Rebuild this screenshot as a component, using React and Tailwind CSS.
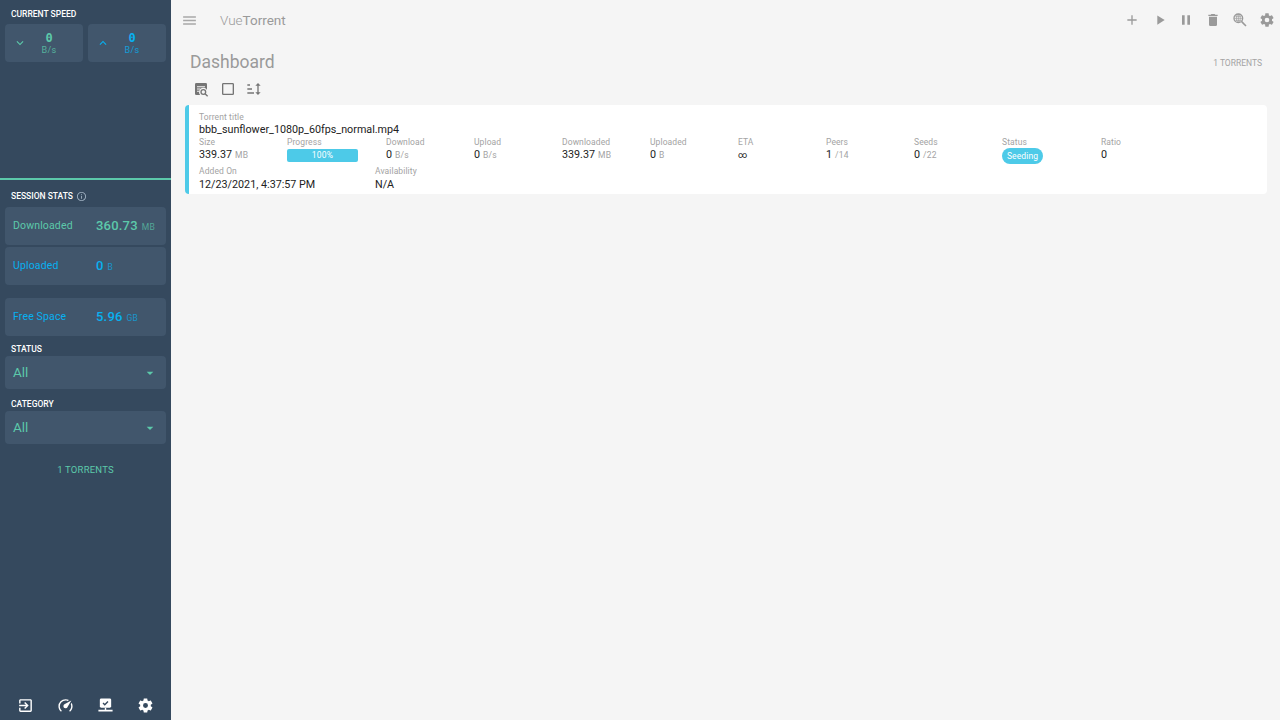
import React from 'react';

const Icon = ({ d, className, evenOdd }) => (
  <svg viewBox="0 0 24 24" className={className} fill="currentColor">
    <path d={d} fillRule={evenOdd ? 'evenodd' : 'nonzero'} />
  </svg>
);

const icons = {
  menu: 'M3,6H21V8H3V6M3,11H21V13H3V11M3,16H21V18H3V16Z',
  plus: 'M19,13H13V19H11V13H5V11H11V5H13V11H19V13Z',
  play: 'M8,5.14V19.14L19,12.14L8,5.14Z',
  pause: 'M14,19H18V5H14M6,19H10V5H6V19Z',
  trash: 'M19,4H15.5L14.5,3H9.5L8.5,4H5V6H19M6,19A2,2 0 0,0 8,21H16A2,2 0 0,0 18,19V7H6V19Z',
  cog: 'M12,15.5A3.5,3.5 0 0,1 8.5,12A3.5,3.5 0 0,1 12,8.5A3.5,3.5 0 0,1 15.5,12A3.5,3.5 0 0,1 12,15.5M19.43,12.97C19.47,12.65 19.5,12.33 19.5,12C19.5,11.67 19.47,11.34 19.43,11L21.54,9.37C21.73,9.22 21.78,8.95 21.66,8.73L19.66,5.27C19.54,5.05 19.27,4.96 19.05,5.05L16.56,6.05C16.04,5.66 15.5,5.32 14.87,5.07L14.5,2.42C14.46,2.18 14.25,2 14,2H10C9.75,2 9.54,2.18 9.5,2.42L9.13,5.07C8.5,5.32 7.96,5.66 7.44,6.05L4.95,5.05C4.73,4.96 4.46,5.05 4.34,5.27L2.34,8.73C2.21,8.95 2.27,9.22 2.46,9.37L4.57,11C4.53,11.34 4.5,11.67 4.5,12C4.5,12.33 4.53,12.65 4.57,12.97L2.46,14.63C2.27,14.78 2.21,15.05 2.34,15.27L4.34,18.73C4.46,18.95 4.73,19.03 4.95,18.95L7.44,17.94C7.96,18.34 8.5,18.68 9.13,18.93L9.5,21.58C9.54,21.82 9.75,22 10,22H14C14.25,22 14.46,21.82 14.5,21.58L14.87,18.93C15.5,18.67 16.04,18.34 16.56,17.94L19.05,18.95C19.27,19.03 19.54,18.95 19.66,18.73L21.66,15.27C21.78,15.05 21.73,14.78 21.54,14.63L19.43,12.97Z',
  down: 'M7.41,8.58L12,13.17L16.59,8.58L18,10L12,16L6,10L7.41,8.58Z',
  up: 'M7.41,15.41L12,10.83L16.59,15.41L18,14L12,8L6,14L7.41,15.41Z',
  caret: 'M7,10L12,15L17,10H7Z',
  box: 'M19,3H5C3.89,3 3,3.89 3,5V19A2,2 0 0,0 5,21H19A2,2 0 0,0 21,19V5C21,3.89 20.1,3 19,3M19,5V19H5V5H19Z',
  sort: 'M18 21L14 17H17V7H14L18 3L22 7H19V17H22M2 19V17H12V19M2 13V11H9V13M2 7V5H6V7H2Z',
  exit: 'M19,3H5C3.89,3 3,3.89 3,5V9H5V5H19V19H5V15H3V19A2,2 0 0,0 5,21H19A2,2 0 0,0 21,19V5C21,3.89 20.1,3 19,3M10.08,15.58L11.5,17L16.5,12L11.5,7L10.08,8.41L12.67,11H3V13H12.67L10.08,15.58Z',
  speed: 'M12,16A3,3 0 0,1 9,13C9,11.88 9.61,10.9 10.5,10.39L20.21,4.77L14.68,14.35C14.18,15.33 13.17,16 12,16M12,3C13.81,3 15.5,3.5 16.97,4.32L14.87,5.53C14,5.19 13,5 12,5A8,8 0 0,0 4,13C4,15.21 4.89,17.21 6.34,18.65H6.35C6.74,19.04 6.74,19.67 6.35,20.06C5.96,20.45 5.32,20.45 4.93,20.07V20.07C3.12,18.26 2,15.76 2,13A10,10 0 0,1 12,3M22,13C22,15.76 20.88,18.26 19.07,20.07V20.07C18.68,20.45 18.05,20.45 17.66,20.06C17.27,19.67 17.27,19.04 17.66,18.65V18.65C19.11,17.2 20,15.21 20,13C20,12 19.81,11 19.46,10.1L20.67,8C21.5,9.5 22,11.19 22,13Z',
  info: 'M11,9H13V7H11M12,20C7.59,20 4,16.41 4,12C4,7.59 7.59,4 12,4C16.41,4 20,7.59 20,12C20,16.41 16.41,20 12,20M12,2A10,10 0 0,0 2,12A10,10 0 0,0 12,22A10,10 0 0,0 22,12A10,10 0 0,0 12,2M11,17H13V11H11V17Z',
};

// filled page with text lines and a magnifier over its corner
const TextBoxSearch = ({ className }) => (
  <svg viewBox="0 0 24 24" className={className} fill="currentColor">
    <path d="M5 3H19A2 2 0 0 1 21 5V19A2 2 0 0 1 19 21H5A2 2 0 0 1 3 19V5A2 2 0 0 1 5 3Z" />
    <path d="M6 8.5H18M6 12H11M6 15.5H9" stroke="#f5f5f5" strokeWidth="1.6" fill="none" />
    <circle cx="15.5" cy="16.5" r="6.5" fill="#f5f5f5" />
    <circle cx="15.5" cy="16.5" r="3.5" fill="none" stroke="currentColor" strokeWidth="2" />
    <path d="M18 19L22 23" stroke="currentColor" strokeWidth="2" fill="none" />
  </svg>
);

const SearchWeb = ({ className }) => (
  <svg viewBox="0 0 24 24" className={className} fill="none" stroke="currentColor">
    <circle cx="9.5" cy="9.5" r="6.5" strokeWidth="2" />
    <path d="M14.5 14.5L21 21" strokeWidth="2.4" />
    <path d="M3.5 9.5H15.5M9.5 3.5V15.5M5 6.5H14M5 12.5H14" strokeWidth="1" />
    <ellipse cx="9.5" cy="9.5" rx="3" ry="6" strokeWidth="1" />
  </svg>
);

const ServerCheck = ({ className }) => (
  <svg viewBox="0 0 24 24" className={className} fill="currentColor">
    <path d="M6 2H18A2 2 0 0 1 20 4V13A2 2 0 0 1 18 15H6A2 2 0 0 1 4 13V4A2 2 0 0 1 6 2Z" />
    <path d="M11 15H13V18H22V20.5H2V18H11Z" />
    <path d="M8.5 8.5L11 11L15.5 6.5" fill="none" stroke="#35495e" strokeWidth="2" />
  </svg>
);

const SideLabel = ({ children, className = '' }) => (
  <div className={`text-[8.5px] leading-3 font-medium uppercase text-white ${className}`}>
    {children}
  </div>
);

const SpeedCard = ({ icon, color, value }) => (
  <div className={`flex-1 h-[38px] rounded-[4px] bg-[#41566c] flex items-center pl-[8px] ${color}`}>
    <Icon d={icon} className="w-[14px] h-[14px] shrink-0" />
    <div className="flex-1 flex flex-col items-center pr-[12px]">
      <span className="font-['DejaVu_Sans_Mono',monospace] font-bold text-[12px] leading-[14px]">{value}</span>
      <span className="text-[9px] leading-[11px] tracking-[0.3px] opacity-80">B/s</span>
    </div>
  </div>
);

const StatCard = ({ label, value, unit, color, className = '' }) => (
  <div className={`h-[38px] rounded-[4px] bg-[#41566c] flex items-center pl-[8px] ${color} ${className}`}>
    <span className="w-[83px] text-[10.5px] tracking-[0.15px]">{label}</span>
    <span className="text-[13px] font-medium tracking-[0.2px]">{value}</span>
    <span className="ml-[4px] mt-[2px] text-[8.5px] tracking-[0.2px] opacity-70">{unit}</span>
  </div>
);

const SelectBox = () => (
  <div className="h-[33px] rounded-[4px] bg-[#41566c] flex items-center justify-between pl-[8px] pr-[8px] text-[#5cc9aa]">
    <span className="text-[13.5px]">All</span>
    <Icon d={icons.caret} className="w-[16px] h-[16px]" />
  </div>
);

const Cell = ({ label, width = 'w-[60px]', children }) => (
  <div className={`${width} shrink-0 flex flex-col`}>
    <span className="text-[8.5px] leading-[11px] tracking-[0.1px] text-[#a3a3a3]">{label}</span>
    {children}
  </div>
);

const Value = ({ main, unit, className = '' }) => (
  <span className={`text-[10.75px] leading-[14px] text-[#222] whitespace-nowrap ${className}`}>
    {main}
    {unit && <span className="ml-[3px] text-[8.5px] tracking-[0.2px] text-[#a3a3a3]">{unit}</span>}
  </span>
);

const App = () => {
  return (
    <div className="w-[1280px] h-[720px] overflow-hidden flex bg-[#f5f5f5] font-['Roboto',sans-serif]">
      {/* Sidebar */}
      <aside className="w-[171px] shrink-0 h-full bg-[#35495e] flex flex-col">
        <div className="h-[180px] border-b-2 border-[#5cc9aa] px-[5px] pt-[8px] shrink-0">
          <SideLabel className="pl-[6px]">Current Speed</SideLabel>
          <div className="flex gap-[5px] mt-[4px]">
            <SpeedCard icon={icons.down} color="text-[#5cc9aa]" value="0" />
            <SpeedCard icon={icons.up} color="text-[#08b0f0]" value="0" />
          </div>
        </div>
        <div className="px-[5px] pt-[10px] flex-1 flex flex-col">
          <div className="flex items-center gap-[3px] pl-[6px] mb-[5px]">
            <SideLabel>Session Stats</SideLabel>
            <Icon d={icons.info} className="w-[11px] h-[11px] text-[#9fb0c0]" />
          </div>
          <StatCard label="Downloaded" value="360.73" unit="MB" color="text-[#5cc9aa]" />
          <StatCard label="Uploaded" value="0" unit="B" color="text-[#08b0f0]" className="mt-[2px]" />
          <StatCard label="Free Space" value="5.96" unit="GB" color="text-[#08b0f0]" className="mt-[13px]" />
          <SideLabel className="pl-[6px] mt-[7px] mb-[1px]">Status</SideLabel>
          <SelectBox />
          <SideLabel className="pl-[6px] mt-[9px] mb-[1px]">Category</SideLabel>
          <SelectBox />
          <div className="mt-[19px] text-center text-[9.5px] tracking-[0.2px] text-[#5cc9aa]">1 TORRENTS</div>
          <div className="mt-auto h-[30px] flex items-center gap-[20px] pl-[12px] text-white">
            <Icon d={icons.exit} className="w-[17px] h-[17px]" />
            <Icon d={icons.speed} className="w-[17px] h-[17px] ml-[3px]" />
            <ServerCheck className="w-[17px] h-[17px] ml-[3px]" />
            <Icon d={icons.cog} className="w-[17px] h-[17px] ml-[3px]" evenOdd />
          </div>
        </div>
      </aside>

      {/* Main */}
      <main className="flex-1 min-w-0 flex flex-col">
        <header className="h-[40px] shrink-0 flex items-center pl-[10px] pr-[5px] text-[#9a9a9a]">
          <Icon d={icons.menu} className="w-[17px] h-[17px] text-[#a8a8a8]" />
          <span className="ml-[22px] text-[13.5px]">
            <span className="font-light">Vue</span>
            <span>Torrent</span>
          </span>
          <div className="ml-auto flex items-center gap-[11px]">
            <Icon d={icons.plus} className="w-[16px] h-[16px]" />
            <Icon d={icons.play} className="w-[16px] h-[16px] ml-[1px] -mr-[1px]" />
            <Icon d={icons.pause} className="w-[16px] h-[16px]" />
            <Icon d={icons.trash} className="w-[16px] h-[16px]" />
            <SearchWeb className="w-[16px] h-[16px]" />
            <Icon d={icons.cog} className="w-[16px] h-[16px]" evenOdd />
          </div>
        </header>

        <div className="flex items-center justify-between pl-[19px] pr-[18px] mt-[11px] h-[22px]">
          <h1 className="text-[17.5px] text-[#9a9a9a]">Dashboard</h1>
          <span className="text-[8.5px] mt-[2px] text-[#a3a3a3]">1 TORRENTS</span>
        </div>

        <div className="flex items-center gap-[10.5px] pl-[22px] mt-[8px] h-[16px] text-[#757575]">
          <TextBoxSearch className="w-[16px] h-[16px]" />
          <Icon d={icons.box} className="w-[16px] h-[16px]" />
          <Icon d={icons.sort} className="w-[16px] h-[16px]" />
        </div>

        {/* Torrent card */}
        <section className="ml-[14px] mr-[13px] mt-[8px] h-[89px] bg-white rounded-[4px] border-l-4 border-[#4dcae8] pl-[10px] pt-[7px]">
          <div className="text-[8.5px] leading-[11px] tracking-[0.1px] text-[#a3a3a3]">Torrent title</div>
          <div className="text-[10.75px] leading-[14px] text-[#222]">bbb_sunflower_1080p_60fps_normal.mp4</div>
          <div className="flex gap-[28px]">
            <Cell label="Size"><Value main="339.37" unit="MB" /></Cell>
            <Cell label="Progress" width="w-[71px]">
              <div className="h-[13px] mt-[1px] rounded-[2px] bg-[#4dcae8] flex items-center justify-center text-[8.5px] tracking-[0.2px] text-white">100%</div>
            </Cell>
            <Cell label="Download"><Value main="0" unit="B/s" /></Cell>
            <Cell label="Upload"><Value main="0" unit="B/s" /></Cell>
            <Cell label="Downloaded"><Value main="339.37" unit="MB" /></Cell>
            <Cell label="Uploaded"><Value main="0" unit="B" /></Cell>
            <Cell label="ETA"><span className="text-[9px] leading-[14px] text-[#222]">∞</span></Cell>
            <Cell label="Peers"><Value main="1" unit="/14" /></Cell>
            <Cell label="Seeds"><Value main="0" unit="/22" /></Cell>
            <Cell label="Status" width="w-[71px]">
              <span className="w-[41px] h-[16px] rounded-full bg-[#4dcae8] flex items-center justify-center text-[8.5px] tracking-[0.1px] text-white">Seeding</span>
            </Cell>
            <Cell label="Ratio"><Value main="0" /></Cell>
          </div>
          <div className="flex gap-[28px] mt-[2px]">
            <Cell label="Added On" width="w-[148px]"><Value main="12/23/2021, 4:37:57 PM" className="mt-[1px]" /></Cell>
            <Cell label="Availability"><Value main="N/A" className="mt-[1px]" /></Cell>
          </div>
        </section>
      </main>
    </div>
  );
};

export default App;
